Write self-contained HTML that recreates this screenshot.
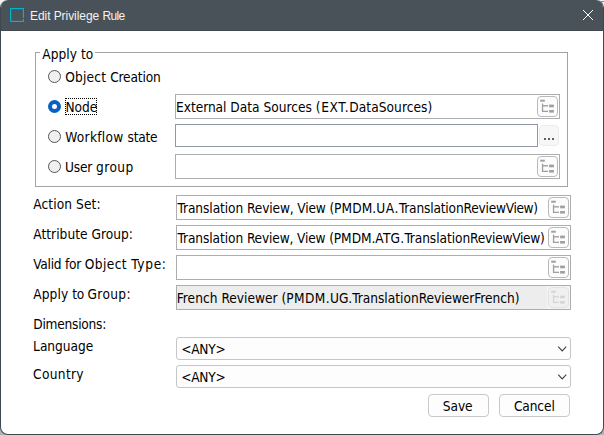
<!DOCTYPE html>
<html><head><meta charset="utf-8"><title>Edit Privilege Rule</title>
<style>
*{box-sizing:border-box;margin:0;padding:0}
html,body{width:604px;height:435px;overflow:hidden;background:#b1b1b1}
body{position:relative;font-family:"DejaVu Sans Condensed","Liberation Sans",sans-serif;font-size:13.6px;color:#000}
.win{position:absolute;left:0;top:0;width:604px;height:435px;background:#fff;border:1px solid #3f484e;border-top:none;border-radius:8px;overflow:hidden}
.tb{position:absolute;left:-1px;top:0;width:604px;height:31px;background:#4a5259;border-bottom:1px solid #424a50}
.tb .ico{position:absolute;left:10px;top:8px;width:14px;height:14px;border:1px solid #00b4cc;box-shadow:inset 0 0 0 1px rgba(0,180,204,.16)}
.tb .ico i{position:absolute;left:12px;top:9px;width:1px;height:1px;background:#4a5259}
.tb .ttl{position:absolute;left:30.1px;top:9px;font-family:"Liberation Sans",sans-serif;font-size:12px;line-height:14px;letter-spacing:0px;color:#f2f2f2;white-space:nowrap}
.t{position:absolute;white-space:nowrap;line-height:16px;height:16px}
.fs{position:absolute;left:35px;top:52px;width:533px;height:135px;border:1px solid #a3a3a3}
.leg{position:absolute;left:40px;top:46px;width:55px;height:14px;background:#fff}
.radio{position:absolute;width:13px;height:13px;border-radius:50%;border:1px solid #555;background:#f0f0f0}
.radio.on{border:4px solid #0b5fc0;background:#fff}
.in{position:absolute;border:1px solid #adadad;background:#fff;height:25px}
.in.dis{background:#ededed}
.in.wf{border-color:#9297a7;height:23px}
.btn{position:absolute;width:21px;height:21px;border:1px solid #b9b9b9;border-radius:4px;background:#fcfcfc}
.btn svg{position:absolute;left:-1px;top:-1px}
.sel{position:absolute;left:176px;width:395px;height:23px;border:1px solid #c6c6c6;border-radius:3px;background:#fdfdfd}
.pb{position:absolute;height:23px;border:1px solid #c9c9c9;border-radius:4px;background:#fdfdfd}
</style></head><body>
<div class="win">
 <div class="tb">
  <div class="ico"><i></i></div>
  <div class="ttl"><span style="letter-spacing:-0.096px">Edit </span><span style="letter-spacing:-0.056px">Privilege </span><span style="letter-spacing:-0.636px">Rule</span></div>
  <svg style="position:absolute;left:582px;top:9px" width="12" height="12" viewBox="0 0 12 12"><path d="M1 1 L11 11 M11 1 L1 11" stroke="#fff" stroke-width="1" fill="none"/></svg>
 </div>
</div>
<svg style="position:absolute;left:0;top:0" width="8" height="8"><path d="M0 0H7.4A7.4 7.4 0 0 0 0 7.4Z" fill="#f4f4f4"/></svg>
<svg style="position:absolute;left:596px;top:0" width="8" height="8"><path d="M8 0H0.8A7.2 7.2 0 0 1 8 7.2Z" fill="#f4f4f4"/><rect x="4.6" y="1" width="3.4" height="1" fill="#8c8c8c"/></svg>

<div class="fs"></div>
<div class="leg"></div>
<div class="t" style="left:42.3px;top:46px;letter-spacing:0.032px;">Apply to</div>
<div class="radio" style="left:48px;top:70px"></div>
<div class="radio on" style="left:48px;top:100px"></div>
<div class="radio" style="left:48px;top:130px"></div>
<div class="radio" style="left:48px;top:160px"></div>
<div class="t" style="left:65.3px;top:69px"><span style="letter-spacing:0.159px">Object </span><span style="letter-spacing:-0.155px">Creation</span></div>
<div class="t" style="left:65.4px;top:99px;letter-spacing:-0.047px;">Node</div>
<div class="t" style="left:65.3px;top:129px"><span style="letter-spacing:0.26px">Workflow </span><span style="letter-spacing:-0.282px">state</span></div>
<div class="t" style="left:64.9px;top:159px"><span style="letter-spacing:-0.123px">User </span><span style="letter-spacing:0.422px">group</span></div>
<div style="position:absolute;left:65px;top:98px;width:32px;height:17px;border:1px dotted #000"></div>
<div class="in" style="left:175px;top:94px;width:385px"></div>
<div class="in wf" style="left:175px;top:124px;width:363px"></div>
<div class="in" style="left:175px;top:154px;width:385px"></div>
<div class="t" style="left:176.0px;top:99px"><span style="letter-spacing:-0.037px">External </span><span style="letter-spacing:0.036px">Data </span><span style="letter-spacing:0.009px">Sources </span><span style="letter-spacing:0.596px">(</span><span style="letter-spacing:0.621px">EXT.</span><span style="letter-spacing:0.06px">DataSources)</span></div>
<div class="in" style="left:176px;top:195px;width:395px"></div>
<div class="in" style="left:176px;top:225px;width:395px"></div>
<div class="in" style="left:176px;top:255px;width:395px"></div>
<div class="in dis" style="left:176px;top:285px;width:395px"></div>
<div style="position:absolute;left:547px;top:286px;width:23px;height:23px;background:#f4f4f4"></div>
<div class="t" style="left:177.6px;top:200px"><span style="letter-spacing:-0.074px">Translation </span><span style="letter-spacing:-0.141px">Review, </span><span style="letter-spacing:-0.141px">View (</span><span style="letter-spacing:0.089px">PMDM.</span><span style="letter-spacing:0.542px">UA.</span><span style="letter-spacing:-0.164px">Translation</span><span style="letter-spacing:-0.208px">Review</span><span style="letter-spacing:-0.416px">View)</span></div>
<div class="t" style="left:177.6px;top:230px"><span style="letter-spacing:-0.085px">Translation </span><span style="letter-spacing:-0.152px">Review, </span><span style="letter-spacing:-0.152px">View (</span><span style="letter-spacing:-0.042px">PMDM.</span><span style="letter-spacing:0.223px">ATG.</span><span style="letter-spacing:-0.066px">Translation</span><span style="letter-spacing:-0.219px">Review</span><span style="letter-spacing:-0.352px">View)</span></div>
<div class="t" style="left:176.7px;top:290px"><span style="letter-spacing:0.047px">French </span><span style="letter-spacing:0.007px">Reviewer (</span><span style="letter-spacing:0.387px">PMDM.</span><span style="letter-spacing:-0.053px">UG.</span><span style="letter-spacing:0.011px">Translation</span><span style="letter-spacing:-0.078px">Reviewer</span><span style="letter-spacing:-0.003px">French)</span></div>
<div class="t" style="left:33.3px;top:196px;letter-spacing:0.09px;">Action Set:</div>
<div class="t" style="left:33.3px;top:226px;letter-spacing:0.031px;">Attribute Group:</div>
<div class="t" style="left:33.3px;top:256px"><span style="letter-spacing:-0.257px">Valid for </span><span style="letter-spacing:0.414px">Object </span><span style="letter-spacing:0.668px">Type:</span></div>
<div class="t" style="left:33.3px;top:286px"><span style="letter-spacing:0.099px">Apply </span><span style="letter-spacing:-0.318px">to </span><span style="letter-spacing:0.342px">Group:</span></div>
<div class="t" style="left:33.3px;top:316px"><span style="letter-spacing:-0.245px">Dimensions:</span></div>
<div class="t" style="left:33.1px;top:338px"><span style="letter-spacing:-0.017px">Language</span></div>
<div class="t" style="left:33.1px;top:366px"><span style="letter-spacing:0.315px">Country</span></div>
<div class="sel" style="top:337px"></div>
<div class="sel" style="top:365px"></div>
<div class="t" style="left:181.2px;top:341px;letter-spacing:-0.229px;">&lt;ANY&gt;</div>
<div class="t" style="left:181.2px;top:369px;letter-spacing:-0.229px;">&lt;ANY&gt;</div>
<div class="btn" style="left:537px;top:96px;"><svg width="21" height="21" viewBox="0 0 21 21"><g fill="#a0a0a0"><rect x="3.2" y="3.7" width="4.6" height="2"/><rect x="4.9" y="7.6" width="1.3" height="8.4"/><rect x="5" y="9.1" width="6" height="1.4"/><rect x="5" y="14.7" width="6" height="1.3"/><rect x="12.1" y="8.6" width="4.8" height="2.7"/><rect x="12.1" y="14" width="4.8" height="2.6"/></g></svg></div>
<div class="btn" style="left:537px;top:156px;"><svg width="21" height="21" viewBox="0 0 21 21"><g fill="#a0a0a0"><rect x="3.2" y="3.7" width="4.6" height="2"/><rect x="4.9" y="7.6" width="1.3" height="8.4"/><rect x="5" y="9.1" width="6" height="1.4"/><rect x="5" y="14.7" width="6" height="1.3"/><rect x="12.1" y="8.6" width="4.8" height="2.7"/><rect x="12.1" y="14" width="4.8" height="2.6"/></g></svg></div>
<div class="btn" style="left:548px;top:197px;"><svg width="21" height="21" viewBox="0 0 21 21"><g fill="#a0a0a0"><rect x="3.2" y="3.7" width="4.6" height="2"/><rect x="4.9" y="7.6" width="1.3" height="8.4"/><rect x="5" y="9.1" width="6" height="1.4"/><rect x="5" y="14.7" width="6" height="1.3"/><rect x="12.1" y="8.6" width="4.8" height="2.7"/><rect x="12.1" y="14" width="4.8" height="2.6"/></g></svg></div>
<div class="btn" style="left:548px;top:227px;"><svg width="21" height="21" viewBox="0 0 21 21"><g fill="#a0a0a0"><rect x="3.2" y="3.7" width="4.6" height="2"/><rect x="4.9" y="7.6" width="1.3" height="8.4"/><rect x="5" y="9.1" width="6" height="1.4"/><rect x="5" y="14.7" width="6" height="1.3"/><rect x="12.1" y="8.6" width="4.8" height="2.7"/><rect x="12.1" y="14" width="4.8" height="2.6"/></g></svg></div>
<div class="btn" style="left:548px;top:257px;"><svg width="21" height="21" viewBox="0 0 21 21"><g fill="#a0a0a0"><rect x="3.2" y="3.7" width="4.6" height="2"/><rect x="4.9" y="7.6" width="1.3" height="8.4"/><rect x="5" y="9.1" width="6" height="1.4"/><rect x="5" y="14.7" width="6" height="1.3"/><rect x="12.1" y="8.6" width="4.8" height="2.7"/><rect x="12.1" y="14" width="4.8" height="2.6"/></g></svg></div>
<div class="btn" style="left:548px;top:287px;border-color:#e3e3e3;background:#f0f0f0;"><svg width="21" height="21" viewBox="0 0 21 21"><g fill="#d5d5d5"><rect x="3.2" y="3.7" width="4.6" height="2"/><rect x="4.9" y="7.6" width="1.3" height="8.4"/><rect x="5" y="9.1" width="6" height="1.4"/><rect x="5" y="14.7" width="6" height="1.3"/><rect x="12.1" y="8.6" width="4.8" height="2.7"/><rect x="12.1" y="14" width="4.8" height="2.6"/></g></svg></div>
<div class="btn" style="left:539px;top:125px;width:20px;border-color:#ececec;background:#f7f7f7"><svg width="20" height="21"><g fill="#606060"><rect x="5" y="13" width="2" height="2"/><rect x="9" y="13" width="2" height="2"/><rect x="13" y="13" width="2" height="2"/></g></svg></div>
<svg style="position:absolute;left:556px;top:345px" width="12" height="8" viewBox="0 0 12 8"><path d="M2.2 1.7 L6.2 5.9 L10.2 1.7" stroke="#3c3c3c" stroke-width="1.05" fill="none"/></svg>
<svg style="position:absolute;left:556px;top:373px" width="12" height="8" viewBox="0 0 12 8"><path d="M2.2 1.7 L6.2 5.9 L10.2 1.7" stroke="#3c3c3c" stroke-width="1.05" fill="none"/></svg>
<div class="pb" style="left:428px;top:394px;width:61px"></div>
<div class="pb" style="left:499px;top:394px;width:71px"></div>
<div class="t" style="left:442.8px;top:398px;letter-spacing:-0.078px;">Save</div>
<div class="t" style="left:513.9px;top:398px;letter-spacing:-0.105px;">Cancel</div>
</body></html>
